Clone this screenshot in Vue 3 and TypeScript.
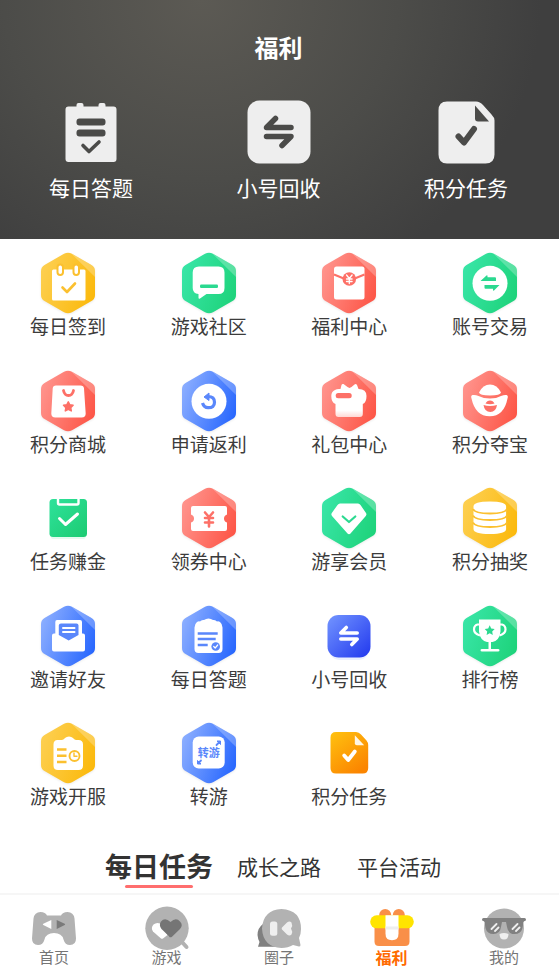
<script setup lang="ts">
import { ref } from 'vue'

type Tone = 'yellow' | 'green' | 'red' | 'blue'

interface Entry {
  icon: string
  label: string
  tone?: Tone
}

const quickEntries: Entry[] = [
  { icon: 'quiz', label: '每日答题' },
  { icon: 'recycle', label: '小号回收' },
  { icon: 'points', label: '积分任务' },
]

const entries: Entry[] = [
  { icon: 'calendar', label: '每日签到', tone: 'yellow' },
  { icon: 'chat', label: '游戏社区', tone: 'green' },
  { icon: 'envelope', label: '福利中心', tone: 'red' },
  { icon: 'exchange', label: '账号交易', tone: 'green' },
  { icon: 'bag', label: '积分商城', tone: 'red' },
  { icon: 'rebate', label: '申请返利', tone: 'blue' },
  { icon: 'gift', label: '礼包中心', tone: 'red' },
  { icon: 'ingot', label: '积分夺宝', tone: 'red' },
  { icon: 'task', label: '任务赚金' },
  { icon: 'coupon', label: '领券中心', tone: 'red' },
  { icon: 'diamond', label: '游享会员', tone: 'green' },
  { icon: 'coins', label: '积分抽奖', tone: 'yellow' },
  { icon: 'mail', label: '邀请好友', tone: 'blue' },
  { icon: 'sheet', label: '每日答题', tone: 'blue' },
  { icon: 'swap', label: '小号回收' },
  { icon: 'trophy', label: '排行榜', tone: 'green' },
  { icon: 'schedule', label: '游戏开服', tone: 'yellow' },
  { icon: 'transfer', label: '转游', tone: 'blue' },
  { icon: 'doc', label: '积分任务' },
]

const tabs: string[] = ['每日任务', '成长之路', '平台活动']
const activeTab = ref<string>('每日任务')

const navItems: Entry[] = [
  { icon: 'home', label: '首页' },
  { icon: 'games', label: '游戏' },
  { icon: 'circle', label: '圈子' },
  { icon: 'welfare', label: '福利' },
  { icon: 'mine', label: '我的' },
]
const activeNav = ref<string>('welfare')
</script>

<template>
  <div class="page">
    <svg class="defs" width="0" height="0" aria-hidden="true">
      <defs>
        <linearGradient id="tone-yellow" x1="0" y1="0.3" x2="1" y2="0.7">
          <stop offset="0" stop-color="#fdcf50" /><stop offset="1" stop-color="#fbb90c" />
        </linearGradient>
        <linearGradient id="tone-green" x1="0" y1="0.3" x2="1" y2="0.7">
          <stop offset="0" stop-color="#38e5a6" /><stop offset="1" stop-color="#1ed37b" />
        </linearGradient>
        <linearGradient id="tone-red" x1="0" y1="0.3" x2="1" y2="0.7">
          <stop offset="0" stop-color="#ff938c" /><stop offset="1" stop-color="#fd5647" />
        </linearGradient>
        <linearGradient id="tone-blue" x1="0" y1="0.3" x2="1" y2="0.7">
          <stop offset="0" stop-color="#8aadff" /><stop offset="1" stop-color="#2867fe" />
        </linearGradient>
        <linearGradient id="swap-fill" x1="0" y1="0" x2="1" y2="1">
          <stop offset="0" stop-color="#7395ff" /><stop offset="1" stop-color="#2138ee" />
        </linearGradient>
        <linearGradient id="doc-fill" x1="0" y1="0" x2="0.7" y2="1">
          <stop offset="0" stop-color="#ffc20f" /><stop offset="1" stop-color="#fb8500" />
        </linearGradient>
        <linearGradient id="task-fill" x1="0" y1="0" x2="1" y2="1">
          <stop offset="0" stop-color="#2fe29b" /><stop offset="1" stop-color="#1ccb72" />
        </linearGradient>
        <linearGradient id="gift-fill" x1="0" y1="0" x2="0" y2="1">
          <stop offset="0.8" stop-color="#fff" /><stop offset="1" stop-color="#ffd9d5" />
        </linearGradient>
      </defs>
    </svg>

    <header class="hero">
      <h1 class="title">福利</h1>
      <div class="quick">
        <button v-for="q in quickEntries" :key="q.icon" type="button" class="quick-item">
          <svg class="quick-icon" viewBox="0 0 64 64" aria-hidden="true">
            <g v-if="q.icon === 'quiz'">
              <path fill="#eee" d="M9.500 6.500h8V5q0-2 2-2h3q2 0 2 2v1.500h15V5q0-2 2-2h3q2 0 2 2v1.500h8q3 0 3 3v49.500q0 3-3 3h-45q-3 0-3-3V9.500q0-3 3-3z" />
              <rect class="ink" x="17.500" y="18.500" width="29" height="7" rx="3" />
              <rect class="ink" x="17.500" y="29.500" width="29" height="7" rx="3" />
              <path class="ink-line" stroke-width="3.600" d="M24 45.500l6 6 10-9.500" />
            </g>
            <g v-else-if="q.icon === 'recycle'">
              <rect fill="#eee" x=".5" y=".5" width="63" height="63" rx="12" />
              <path class="ink-line" stroke-width="5.500" d="M44 27.500H19.500l9-9M19.500 36.500H44l-9 9" />
            </g>
            <g v-else>
              <path fill="#eee" d="M13 1.500h29q4 0 7 3.500l8.500 9.500q3 3 3 6v34q0 9-9 9H13q-8.500 0-8.500-9V10.500q0-9 8.500-9z" />
              <path class="ink" d="M41 5.500l14 16H44q-3 0-3-3z" />
              <path class="ink-line" stroke-width="6" d="M24.500 36.500l5.500 6 10-13.500" />
            </g>
          </svg>
          <span class="quick-label">{{ q.label }}</span>
        </button>
      </div>
    </header>

    <main class="grid">
      <button v-for="e in entries" :key="e.icon" type="button" class="entry">
        <svg class="entry-icon" :class="e.tone" viewBox="0 0 60 60" aria-hidden="true">
          <g v-if="e.tone">
            <path class="hex" d="M26 .8Q30-1.500 34 .8L53.500 12Q57 14 57 18V42Q57 46 53.500 48L34 59.200Q30 61.500 26 59.200L6.500 48Q3 46 3 42V18Q3 14 6.500 12Z" />
            <path fill="#fff" opacity=".25" d="M33 .3L53.500 12Q57 14 57 18V24z" />
          </g>

          <g v-if="e.icon === 'calendar'">
            <rect fill="#fff" x="14" y="16.500" width="33.500" height="31" rx="1.500" />
            <rect class="edge" fill="#fff" stroke-width="2" x="19.500" y="11.500" width="5.500" height="10.500" rx="2.700" />
            <rect class="edge" fill="#fff" stroke-width="2" x="35.500" y="11.500" width="5.500" height="10.500" rx="2.700" />
            <path class="line" stroke-width="2.600" d="M24.500 34.500l4.500 4.500 8-8.500" />
          </g>
          <g v-else-if="e.icon === 'chat'">
            <path fill="#fff" d="M20 13.500h19.500q6 0 6 6V35q0 6-6 6H27.500L21 45.500q-1.500.8-1.500-1V41Q13.700 40.500 13.700 35V19.500q0-6 6.300-6z" />
            <rect class="fill" x="21" y="31.500" width="18" height="3.500" rx="1.200" />
          </g>
          <g v-else-if="e.icon === 'envelope'">
            <rect fill="#fff" x="15" y="13.500" width="30.500" height="33" rx="2.500" />
            <path class="line butt" stroke-width="2" d="M15 21.500l11 4.500M45.500 21.500l-11 4.500" />
            <circle class="fill" cx="30.300" cy="26" r="6.800" />
            <path class="white-line" stroke-width="1.300" d="M27.500 22l2.800 3.500 2.800-3.500M30.300 25.500v5M27.500 26h5.600M27.500 28.500h5.600" />
          </g>
          <g v-else-if="e.icon === 'exchange'">
            <circle fill="#fff" cx="30" cy="30.300" r="17.500" />
            <path class="fill" d="M20.500 28l6-5.500q1-.5 1 .6v1.200h7.500q1 0 1 1V28zM39.500 32L34 37.500q-1 .5-1-.5v-1.300h-7.500q-1 0-1-1V32z" />
          </g>
          <g v-else-if="e.icon === 'bag'">
            <path fill="#fff" d="M18 14.500h24.500q3.300 0 3.500 3l1.700 25q0 4-4 4H17.300q-4 0-4-4L14.700 17.500q.2-3 3.300-3z" />
            <path class="line" stroke-width="2.800" d="M25.500 19.500q1 5 5 5t5-5" />
            <path class="fill round" stroke-width="1.500" d="M30.300 30.800l1.500 3 3.300.5-2.400 2.300.6 3.300-3-1.600-3 1.600.6-3.300-2.400-2.300 3.300-.5z" />
          </g>
          <g v-else-if="e.icon === 'rebate'">
            <circle fill="#fff" cx="30" cy="30.300" r="17.500" />
            <path class="line butt" stroke-width="3.200" d="M29 25.500q6.500 0 6.500 5.700t-6.500 5.500q-4 0-5.500-4.700" />
            <path class="fill round" stroke-width="1" d="M25 26l5-4v7.500z" />
          </g>
          <g v-else-if="e.icon === 'gift'">
            <path fill="url(#gift-fill)" d="M16 19q2-1.500 5.500-1l1-4q.5-1.500 2-1l4 3 2 1 2-1 3-2.500q1.500-1 2.500.5l1.500 4q8 0 8 7 0 6.500-3.700 8V43q0 3-3 3H19.500q-3 0-3-3V33q-4.200-1.500-4.200-8 0-4.500 3.700-6z" />
            <rect class="fill" x="16.700" y="22" width="16" height="5.300" rx="2.500" />
          </g>
          <g v-else-if="e.icon === 'ingot'">
            <path fill="#fff" d="M19 21.500q4-8 11-8t11 8q-.5 3-11 3t-11-3z" />
            <path fill="#fff" d="M12.500 24q3-.5 6 1 5 2.500 11.500 2.500T41 25q3.500-1.500 5.500-1t1 3.500Q44 45.300 29.700 45.300T11.500 27.500Q10.500 24.500 12.500 24z" />
            <path class="fill" d="M25.500 32.500q1.500-3 4.500-3t4.500 3q-4.500 1.500-9 0zM23.500 34q6.500 2 13.500 0-1 7-6.700 7T23.500 34z" />
          </g>
          <g v-else-if="e.icon === 'task'">
            <rect fill="#e4faef" x="13" y="46" width="34.500" height="5" rx="2" />
            <rect fill="url(#task-fill)" x="11.500" y="11" width="37.500" height="38" rx="3.500" />
            <path class="white-line butt" stroke-width="2.400" d="M20 10.500V15q0 1.500 1.500 1.500H39q1.500 0 1.500-1.500v-4.500" />
            <path class="white-line" stroke-width="3" d="M21.500 30.500l6 6 12-10.500" />
          </g>
          <g v-else-if="e.icon === 'coupon'">
            <path fill="#fff" d="M14 18h32q2 0 2 2v6.500q-3 1-3 4t3 4V41q0 2-2 2H14q-2 0-2-2v-6.500q3-1 3-4t-3-4V20q0-2 2-2z" />
            <path class="line" stroke-width="2.600" d="M26 24.500l4 4.500 4-4.500M30 29v9.500M26 30h8M26 34.500h8" />
          </g>
          <g v-else-if="e.icon === 'diamond'">
            <path fill="#fff" d="M21 15.500h18q1.500 0 2.500 1.500l5.500 8q1 1.500-.2 3L31.500 45.500q-1.500 1.500-3 0L13 28q-1.200-1.500-.2-3L18.500 17q1-1.500 2.500-1.500z" />
            <path class="line" stroke-width="2.200" d="M23.700 28.500l6.300 5.500 6.300-5.500" />
          </g>
          <g v-else-if="e.icon === 'coins'">
            <path fill="#fff" d="M13.500 18.500q0-5 16.300-5t16.300 5V41q0 5-16.300 5t-16.300-5z" />
            <path class="line butt" stroke-width="1.800" d="M13 21q2 4.500 17 4.500T47 21M13 27.500q2 4.500 17 4.500t17-4.500M13 34.500q2 4.500 17 4.500t17-4.500" />
          </g>
          <g v-else-if="e.icon === 'mail'">
            <path fill="#fff" d="M19 14h23q2 0 2 2v11.500h1q2 0 2 2v14q0 2-2 2H16q-2 0-2-2v-14q0-2 2-2h1.300V16q0-2 1.700-2z" />
            <path class="fill" d="M23 17.500h15.500q2 0 2 2V29l-9.800 5.500L20.800 29v-9.500q0-2 2.200-2z" />
            <path class="white-line" stroke-width="2" d="M25 22h11.500M25 26h11.500" />
          </g>
          <g v-else-if="e.icon === 'sheet'">
            <path fill="#fff" d="M18 16q1.500-1 3-.500 1.500-2 4-1.500 2-1.500 4.500-1.500T34 14q2.500-.5 4 1.500 1.500-.5 3 .5 2.500 2 2.500 5.500V43q0 4-4 4H19.500q-4 0-4-4V21.500q0-3.500 2.500-5.500z" />
            <path class="line butt" stroke-width="2.300" d="M18.700 27.500h20M18.700 33h18M18.700 39h10" />
            <circle class="fill" cx="36.700" cy="40.500" r="4.300" />
            <path class="white-line" stroke-width="1.200" d="M34.700 40.500l1.500 1.500 2.500-3" />
          </g>
          <g v-else-if="e.icon === 'swap'">
            <rect fill="#eaefff" x="10" y="14" width="40" height="40" rx="10" />
            <rect fill="url(#swap-fill)" x="8.500" y="9" width="43" height="42.500" rx="11" />
            <path class="white-line" stroke-width="3.600" d="M38.200 27H21.800l5.500-5.500M21.800 33h16.400L32.800 38.500" />
          </g>
          <g v-else-if="e.icon === 'trophy'">
            <path fill="none" stroke="#fff" stroke-width="2.200" d="M20 18.500h-2.500q-3.500 1-3.500 5t6 6M39.500 18.500H42q3.500 1 3.500 5t-6 6" />
            <path fill="#fff" d="M19 13.500h21.500v12q-1 9-8 10.500h-1.500v7h7q1.500 0 1.500 1.300T38 45.600H22q-1.500 0-1.500-1.300T22 43h6.500v-7H27q-7-1.500-8-10.500z" />
            <path class="fill" d="M29.700 19.300l1.500 3.200 3.500.5-2.500 2.500.6 3.500-3.100-1.700-3.100 1.700.6-3.500-2.500-2.500 3.500-.5z" />
          </g>
          <g v-else-if="e.icon === 'schedule'">
            <path fill="#fff" d="M19.500 17h4.500q2-.5 3-2 1.500-1.500 4-1.500T35 15q1 1.500 3 2h2.500q4.500 0 4.500 4.500v21q0 4.500-4.500 4.500H20q-4.500 0-4.500-4.500v-21Q15.500 17 19.500 17z" />
            <path class="line butt" stroke-width="2.600" d="M19 26.500h9.500M19 32.800h9.500M19 39h9.500" />
            <circle class="line" stroke-width="1.900" cx="36.500" cy="33" r="5" />
            <path class="line" stroke-width="1.400" d="M36 30v3.300h3" />
          </g>
          <g v-else-if="e.icon === 'transfer'">
            <rect fill="#fff" x="13.700" y="13.500" width="32" height="32" rx="6" />
            <text class="glyph-text" x="29.700" y="33.500" text-anchor="middle">转游</text>
            <path class="line" stroke-width="1.800" d="M37.500 22l3-3M22 37.500l-2 2" />
            <path class="fill round" stroke-width="1" d="M38 18h3.500v3.500zM18.500 37.500V41H22z" />
          </g>
          <g v-else-if="e.icon === 'doc'">
            <path fill="url(#doc-fill)" d="M17 9h20q3 0 5 2.500l5.500 6q1.700 2 1.700 4.500v23q0 5.500-5.500 5.500H17q-5.500 0-5.500-5.500V14.500Q11.500 9 17 9z" />
            <path fill="#fff6e4" d="M35.800 12.300l9.400 10h-7.400q-2 0-2-2z" />
            <path class="white-line" stroke-width="3.800" d="M25.200 32.500l4 4.500 6.600-8.500" />
          </g>
        </svg>
        <span class="entry-label">{{ e.label }}</span>
      </button>
    </main>

    <div class="tabs" role="tablist">
      <button
        v-for="t in tabs"
        :key="t"
        type="button"
        role="tab"
        class="tab"
        :class="{ active: t === activeTab }"
        :aria-selected="t === activeTab"
        @click="activeTab = t"
      >
        {{ t }}
      </button>
    </div>

    <nav class="nav">
      <a
        v-for="n in navItems"
        :key="n.icon"
        href="#"
        class="nav-item"
        :class="{ active: n.icon === activeNav }"
        @click.prevent="activeNav = n.icon"
      >
        <svg class="nav-icon" viewBox="0 0 48 44" aria-hidden="true">
          <g v-if="n.icon === 'home'">
            <path fill="#b2b2b2" d="M10.500 8q5 0 6.500 3.500h14Q32.500 8 37.500 8q6 0 7 6.500l1.500 20q0 6.500-6 6.500-5 0-6.500-5.500Q32 29 24 29t-9.500 6.500Q13 41 8 41q-6 0-6-6.500l1.500-20Q4.500 8 10.500 8z" />
            <path fill="#fff" d="M21.300 16v9l-8-4q-1-.5 0-1.200z" />
            <path fill="#7a7a7a" d="M26.700 16v9l8-4q1-.5 0-1.200z" />
          </g>
          <g v-else-if="n.icon === 'games'">
            <circle fill="#b2b2b2" cx="24" cy="24.300" r="21.700" />
            <path fill="none" stroke="#b2b2b2" stroke-width="4" stroke-linecap="round" d="M39 38l4.500 5" />
            <path fill="#fff" d="M18 34.500L10 27.500Q7.500 24 10.500 20.500 13.500 18 17 19.500L24.500 31 20 34.500q-1 .7-2 0z" />
            <path fill="#757575" d="M26.500 32.700L18.500 25Q15.500 21 18 17.500q4-4.500 9.500.500 5.500-5 9.500-.5 3.500 3.500 0 7.500l-8 7.700q-1.500 1.300-3 0z" />
          </g>
          <g v-else-if="n.icon === 'circle'">
            <path fill="#808080" d="M8 20Q2.500 24 2.500 31 3 36 4.500 38l-1.500 4.700H24z" />
            <path fill="#b2b2b2" d="M26.500 5Q46 6 46 25q0 5-2 9l1.500 7q0 1.500-1.500 1.500l-6-1.500q-5 3-11.500 3Q8 43 7 24.500 8 6 26.500 5z" />
            <rect fill="#efefef" x="15" y="17.500" width="7.300" height="14.300" rx="2.500" />
            <path fill="#efefef" d="M27 25.500q-.7-1 0-2l5-5q2.500-2 4.500 0 1.500 3-.5 6 2 3 .5 6-2 2-4.500 0z" />
          </g>
          <g v-else-if="n.icon === 'welfare'">
            <circle fill="#f98f48" cx="17.200" cy="11" r="6" />
            <circle fill="#f98f48" cx="30.800" cy="11" r="6" />
            <path fill="#f98f48" d="M6.500 22h35v15.500q0 4.500-4.500 4.500H11q-4.500 0-4.500-4.500z" />
            <rect fill="#ffe400" x="2.200" y="11.300" width="43.600" height="13" rx="6.500" />
            <path fill="#fff" d="M17.500 11.300h13v18.500q0 6.500-6.500 6.500t-6.500-6.500z" />
            <rect fill="#eee" x="17.500" y="22.500" width="13" height="3" />
          </g>
          <g v-else>
            <circle fill="#b2b2b2" cx="24" cy="24.500" r="20" />
            <path fill="#808080" d="M3.500 14h41q1.500 0 1.500 1.500T44.500 17l-1 1-1 6q-1.500 6-8 6t-7.500-7l-1-5h-4l-1 5q-1 7-7.500 7t-8-6l-1-6-1-1Q2 17 2 15.500T3.500 14z" />
            <path fill="none" stroke="#eee" stroke-width="1.800" stroke-linecap="round" d="M11.500 25l5-5M15 27l3.500-3.500M32.500 25l5-5M36 27l3.500-3.500" />
            <path fill="#efefef" d="M19.500 30q4.500-2 9 0 0 5.500-4.500 5.500T19.500 30z" />
          </g>
        </svg>
        <span class="nav-label">{{ n.label }}</span>
      </a>
    </nav>
  </div>
</template>

<style>
body {
  background: #fff;
}
</style>

<style scoped>
.page {
  display: flex;
  flex-direction: column;
  min-height: 100vh;
  font-family: 'Noto Sans CJK SC', 'Noto Sans', sans-serif;
  color: #3c3c3c;
}

.page * {
  box-sizing: border-box;
}

button {
  margin: 0;
  padding: 0;
  border: 0;
  background: none;
  font: inherit;
  color: inherit;
  cursor: pointer;
}

.defs {
  position: absolute;
}

.hero {
  padding: 31px 51px 36px 49px;
  background: radial-gradient(ellipse 340px 310px at 36% 0, #5c5a54, #4c4c49 58%, #3f3f3f);
  color: #fff;
}

.title {
  margin: 0 0 37px;
  font-size: 24px;
  line-height: 32px;
  font-weight: 700;
  text-align: center;
}

.quick {
  display: flex;
  justify-content: space-between;
}

.quick-item,
.entry {
  display: flex;
  flex-direction: column;
  align-items: center;
}

.quick-icon {
  display: block;
  width: 64px;
  height: 64px;
}

.quick-label {
  margin-top: 7px;
  font-size: 21px;
  line-height: 32px;
}

.ink {
  fill: #4b4b49;
}

.ink-line {
  fill: none;
  stroke: #4b4b49;
  stroke-linecap: round;
  stroke-linejoin: round;
}

.grid {
  flex: 1;
  display: grid;
  grid-template-columns: repeat(4, 78px);
  grid-auto-rows: 1fr;
  justify-content: space-between;
  padding: 14px 30px 0 29px;
}

.entry {
  min-height: 100px;
  white-space: nowrap;
}

.entry-icon {
  display: block;
  width: 60px;
  height: 60px;
  overflow: visible;
}

.entry-label {
  font-size: 19px;
  line-height: 26px;
}

.yellow { --tone: #fbc02f; }
.green { --tone: #2bd990; }
.red { --tone: #fd7067; }
.blue { --tone: #5a87fb; }

.hex {
  filter: drop-shadow(0 1px 1px rgba(0, 0, 0, 0.08));
}

.yellow .hex { fill: url(#tone-yellow); }
.green .hex { fill: url(#tone-green); }
.red .hex { fill: url(#tone-red); }
.blue .hex { fill: url(#tone-blue); }

.fill,
.glyph-text {
  fill: var(--tone);
}

.edge,
.round {
  stroke: var(--tone);
  stroke-linejoin: round;
}

.line,
.white-line {
  fill: none;
  stroke: var(--tone);
  stroke-linecap: round;
  stroke-linejoin: round;
}

.white-line {
  stroke: #fff;
}

.butt {
  stroke-linecap: butt;
}

.glyph-text {
  font-size: 11px;
  font-weight: 700;
}

.tabs {
  display: flex;
  justify-content: center;
  height: 52px;
  padding-right: 1px;
}

.tab {
  position: relative;
  width: 120px;
  height: 52px;
  padding-bottom: 2px;
  font-size: 21px;
  line-height: 50px;
  white-space: nowrap;
  color: #333;
}

.tab.active {
  font-size: 27px;
  font-weight: 700;
}

.tab.active::after {
  content: '';
  position: absolute;
  left: 50%;
  bottom: 5px;
  width: 68px;
  height: 3px;
  margin-left: -34px;
  border-radius: 2px;
  background: #ff6e6e;
}

.nav {
  display: flex;
  justify-content: space-between;
  height: 84px;
  padding: 9px 31px 0 30px;
  border-top: 2px solid #f6f6f6;
}

.nav-item {
  display: flex;
  flex-direction: column;
  align-items: center;
  width: 48px;
  font-size: 15px;
  line-height: 20px;
  color: #757575;
  text-decoration: none;
}

.nav-icon {
  display: block;
  width: 48px;
  height: 44px;
  overflow: visible;
}

.nav-label {
  line-height: 18px;
}

.nav-item.active {
  font-size: 16px;
  font-weight: 700;
  color: #ff6a00;
}
</style>
